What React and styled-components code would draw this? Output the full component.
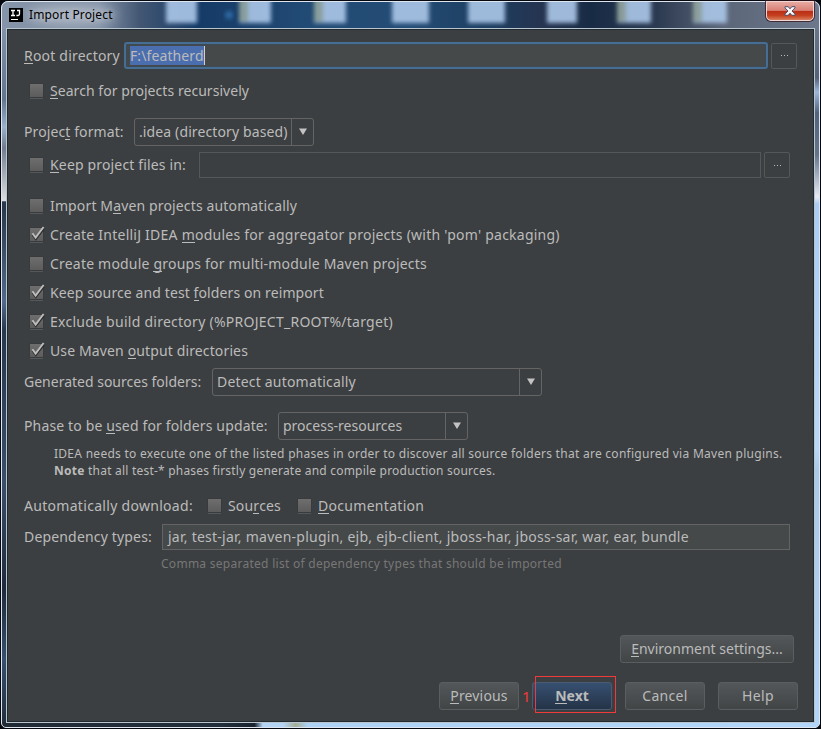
import React from "react";
import styled, { createGlobalStyle, css } from "styled-components";

const GlobalStyle = createGlobalStyle`
  *, *::before, *::after { box-sizing: border-box; }
  body { margin: 0; background: #05080f; overflow: hidden; }
`;

const Frame = styled.div`
  position: relative;
  width: 821px;
  height: 729px;
  padding: 1px;
  display: flex;
  overflow: hidden;
  background: #05080f;
  color: #bbbbbb;
  font: 14px/20px "Noto Sans", "Open Sans", sans-serif;
`;

const Backdrop = styled.svg`
  position: absolute;
  inset: 0;
`;

const Glass = styled.div`
  position: relative;
  flex: 1;
  display: flex;
  flex-direction: column;
  padding: 0 5px 5px;
  border: 1px solid #dfe6ef;
  border-radius: 7px 7px 5px 5px;
`;

const TitleBar = styled.header`
  height: 27px;
  flex: none;
  display: flex;
  align-items: flex-start;
  padding-left: 2px;
`;

const AppIcon = styled.svg`
  margin-top: 6px;
`;

const Title = styled.h1`
  margin: 4px 0 0 6px;
  font-size: 12px;
  font-weight: 400;
  line-height: 18px;
  letter-spacing: 0.15px;
  color: #000;
  text-shadow: 0 0 6px rgba(255, 255, 255, 0.35);
`;

const CloseButton = styled.button`
  width: 48px;
  height: 20px;
  margin: -1px 0 0 auto;
  padding: 0;
  display: flex;
  align-items: center;
  justify-content: center;
  border: 1px solid #f1d6d3;
  border-radius: 0 0 5px 5px;
  background: linear-gradient(#e7aaa2 0, #d98075 47%, #b92d15 50%, #c5401f 75%, #d8805f 100%);
  box-shadow: 0 0 0 1px rgba(50, 20, 30, 0.75);
`;

const Client = styled.main`
  flex: 1;
  display: flex;
  flex-direction: column;
  padding: 12px 15px 0 16px;
  border: 1px solid #202a30;
  outline: 1px solid #b8c5cd;
  background: #3c3f41;
`;

const Row = styled.div`
  flex: none;
  display: flex;
  align-items: center;
  height: ${(p) => p.$h}px;
  margin-top: ${(p) => p.$top || 0}px;
`;

const Text = styled.span`
  flex: none;
  white-space: pre;
  letter-spacing: ${(p) => p.$track || 0}px;
`;

const FieldLabel = styled(Text)`
  width: ${(p) => p.$w}px;
`;

const Mnemonic = styled.span`
  box-shadow: 0 1px 0 #bbbbbb;
  display: inline-block;
  line-height: 14px;
`;

const inputBase = css`
  display: flex;
  align-items: center;
  height: 26px;
  flex: none;
  width: ${(p) => p.$w}px;
`;

const FocusedInput = styled.div`
  ${inputBase}
  height: 27px;
  padding-left: 4px;
  border: 2px solid #466d94;
  border-radius: 3px;
  background: #45494a;
  box-shadow: inset 0 0 0 1px #3d4b57;
`;

const Selection = styled.span`
  height: 19px;
  line-height: 19px;
  letter-spacing: 0.1px;
  background: #4b6eaf;
  border-right: 1px solid #d0d0d0;
`;

const Input = styled.div`
  ${inputBase}
  padding-left: 5px;
  border: 1px solid ${(p) => (p.$disabled ? "#555758" : "#646464")};
  background: ${(p) => (p.$disabled ? "transparent" : "#45494a")};
`;

const BrowseButton = styled.button`
  flex: none;
  width: 26px;
  height: 26px;
  margin-left: 3px;
  padding: 0;
  display: flex;
  align-items: center;
  justify-content: center;
  gap: 2px;
  border: 1px solid #555758;
  border-radius: 2px;
  background: transparent;
`;

const Dot = styled.i`
  width: 1px;
  height: 1px;
  background: #bbbbbb;
`;

const ComboBox = styled.div`
  flex: none;
  display: flex;
  align-items: center;
  width: ${(p) => p.$w}px;
  height: 28px;
  padding-left: 4px;
  border: 1px solid #646464;
  border-radius: 3px;
`;

const ComboArrow = styled.span`
  display: flex;
  align-items: center;
  justify-content: center;
  width: 22px;
  height: 26px;
  margin-left: auto;
  border-left: 1px solid #646464;
`;

const CheckLabel = styled.label`
  flex: none;
  display: flex;
  align-items: center;
  gap: 5px;
  margin-left: ${(p) => (p.$inline ? 0 : 5)}px;
`;

const CheckRow = styled(CheckLabel)`
  height: 29px;
`;

const CheckList = styled.div`
  display: flex;
  flex-direction: column;
  flex: none;
  margin-top: 13px;
`;

const Hint = styled.p`
  flex: none;
  margin: ${(p) => p.$top}px 0 0 ${(p) => p.$left}px;
  font-size: 12px;
  line-height: 17px;
  letter-spacing: 0.272px;
  white-space: nowrap;
  color: ${(p) => (p.$muted ? "#777777" : "#bbbbbb")};
`;

const Button = styled.button`
  flex: none;
  width: ${(p) => p.$w || 80}px;
  height: 28px;
  padding: 0 0 1px;
  border: 1px solid ${(p) => (p.$primary ? "#4c5b70" : "#5b5e60")};
  border-radius: 3px;
  background: ${(p) =>
    p.$primary ? "linear-gradient(#375071, #243347)" : "linear-gradient(#535759, #414546)"};
  color: #bbbbbb;
  font: inherit;
  font-weight: ${(p) => (p.$primary ? 700 : 400)};
  letter-spacing: ${(p) => p.$track || 0}px;
`;

const ButtonRow = styled(Row)`
  justify-content: flex-end;
  padding-right: ${(p) => p.$right || 0}px;
  gap: 13px;
`;

const Highlight = styled.div`
  position: relative;
`;

const HighlightBox = styled.span`
  position: absolute;
  left: 3px;
  top: -6px;
  width: 81px;
  height: 37px;
  border: 1px solid #f03a3a;
`;

const StepNumber = styled.span`
  position: absolute;
  left: -10px;
  top: 4px;
  font-size: 15px;
  color: #f03a3a;
`;

function Check({ checked }) {
  return (
    <svg width="16" height="18" viewBox="0 0 16 18">
      <defs>
        <linearGradient id="checkFill" x1="0" y1="0" x2="0" y2="1">
          <stop offset="0" stopColor="#6e6e6e" />
          <stop offset="1" stopColor="#5c5c5c" />
        </linearGradient>
      </defs>
      <rect x="0.5" y="1.5" width="14" height="14" rx="1" fill="#343638" />
      <rect x="1" y="2" width="13" height="13" fill="url(#checkFill)" />
      <path d="M1 16.5h13" stroke="#55585a" />
      {checked && (
        <>
          <path d="M3.5 8.5L6.8 13L15 2.6" fill="none" stroke="#2e2e2e" strokeWidth="2.2" />
          <path d="M3.4 7.2L6.6 11.6L14.6 1" fill="none" stroke="#bdbdbd" strokeWidth="1.9" />
        </>
      )}
    </svg>
  );
}

function Combo({ width, track, children }) {
  return (
    <ComboBox $w={width}>
      <Text $track={track}>{children}</Text>
      <ComboArrow>
        <svg width="10" height="8" viewBox="0 0 10 8">
          <path d="M1 0.5h8L5 7z" fill="#c3c3c3" />
        </svg>
      </ComboArrow>
    </ComboBox>
  );
}

function Browse() {
  return (
    <BrowseButton aria-label="Browse">
      <Dot />
      <Dot />
      <Dot />
    </BrowseButton>
  );
}

const desktopIcons = [
  [166, 31, false],
  [239, 32, true],
  [314, 32, true],
  [392, 37, false],
  [468, 37, false],
  [547, 30, false],
  [617, 34, true],
  [693, 34, true],
];

function DesktopGlass() {
  return (
    <Backdrop width="821" height="729" viewBox="0 0 821 729">
      <defs>
        <linearGradient id="top" x1="0" x2="1">
          <stop offset="0" stopColor="#8594a8" />
          <stop offset="0.12" stopColor="#8291a7" />
          <stop offset="0.17" stopColor="#435773" />
          <stop offset="0.24" stopColor="#153a66" />
          <stop offset="0.37" stopColor="#214a74" />
          <stop offset="0.5" stopColor="#244c75" />
          <stop offset="0.6" stopColor="#1d3d5f" />
          <stop offset="0.66" stopColor="#263450" />
          <stop offset="0.72" stopColor="#182b45" />
          <stop offset="0.8" stopColor="#2c3a51" />
          <stop offset="0.88" stopColor="#5c6679" />
          <stop offset="1" stopColor="#6d788c" />
        </linearGradient>
        <linearGradient id="left" x1="0" y1="0" x2="0" y2="1">
          <stop offset="0" stopColor="#8191a8" />
          <stop offset="0.1" stopColor="#62758f" />
          <stop offset="0.14" stopColor="#9ab0cc" />
          <stop offset="0.17" stopColor="#707c8e" />
          <stop offset="0.245" stopColor="#dededf" />
          <stop offset="0.247" stopColor="#28374a" />
          <stop offset="0.39" stopColor="#52698a" />
          <stop offset="0.43" stopColor="#27394f" />
          <stop offset="0.65" stopColor="#3b4e6a" />
          <stop offset="0.8" stopColor="#1f2a3b" />
          <stop offset="0.9" stopColor="#37506f" />
          <stop offset="1" stopColor="#202b38" />
        </linearGradient>
        <linearGradient id="right" x1="0" y1="0" x2="0" y2="1">
          <stop offset="0" stopColor="#697489" />
          <stop offset="0.07" stopColor="#566178" />
          <stop offset="0.09" stopColor="#9ab8dc" />
          <stop offset="0.12" stopColor="#52627c" />
          <stop offset="0.18" stopColor="#65738a" />
          <stop offset="0.24" stopColor="#e8edf4" />
          <stop offset="0.25" stopColor="#a9cdf5" />
          <stop offset="0.6" stopColor="#b8d8fb" />
          <stop offset="0.63" stopColor="#a9c9ea" />
          <stop offset="1" stopColor="#b2d5fa" />
        </linearGradient>
        <linearGradient id="bottom" x1="0" x2="1">
          <stop offset="0" stopColor="#202a35" />
          <stop offset="0.27" stopColor="#222e3b" />
          <stop offset="0.31" stopColor="#19222e" />
          <stop offset="0.32" stopColor="#b3d4f4" />
          <stop offset="0.345" stopColor="#b3d4f4" />
          <stop offset="0.36" stopColor="#a3ae98" />
          <stop offset="0.375" stopColor="#add2f5" />
          <stop offset="1" stopColor="#b2d5fa" />
        </linearGradient>
        <filter id="soft" x="-20%" y="-30%" width="140%" height="160%">
          <feGaussianBlur stdDeviation="2" />
        </filter>
        <filter id="haze" x="-50%" y="-50%" width="200%" height="200%">
          <feGaussianBlur stdDeviation="6" />
        </filter>
        <clipPath id="pane">
          <rect x="1" y="1" width="819" height="727" rx="7" />
        </clipPath>
      </defs>
      <g clipPath="url(#pane)">
        <rect y="0" width="821" height="30" fill="url(#top)" />
        <rect x="0" y="29" width="8" height="700" fill="url(#left)" />
        <rect x="813" y="29" width="8" height="700" fill="url(#right)" />
        <rect x="0" y="722" width="821" height="7" fill="url(#bottom)" />
        <ellipse cx="72" cy="15" rx="44" ry="9" fill="#bcc3cd" opacity="0.75" filter="url(#haze)" />
        <circle cx="229" cy="15" r="4" fill="#3575b3" opacity="0.8" filter="url(#soft)" />
        {desktopIcons.map(([x, w, folder]) => (
          <g key={x} filter="url(#soft)" opacity="0.92">
            <rect x={x} y="-4" width={w} height="27" fill="#a9c5e6" />
            {folder && <rect x={x} y="-4" width="9" height="26" fill="#93a6a0" />}
          </g>
        ))}
      </g>
    </Backdrop>
  );
}

export default function App() {
  return (
    <>
      <GlobalStyle />
      <Frame>
        <DesktopGlass />
        <Glass>
          <TitleBar>
            <AppIcon width="14" height="14" viewBox="0 0 14 14">
              <rect width="14" height="14" fill="#000" />
              <path
                d="M2 2.5h4M4 2.5v5M2 7.5h4M8 2.5h3.2M10.5 2.5v3.6q0 1.4-1.4 1.4H7.4"
                fill="none"
                stroke="#fff"
                strokeWidth="1.3"
              />
              <path d="M2 11.5h7" stroke="#fff" />
            </AppIcon>
            <Title>Import Project</Title>
            <CloseButton aria-label="Close">
              <svg width="12" height="10" viewBox="0 0 12 10">
                <path
                  d="M1 .7h3.2L6 2.8 7.8.7H11v1.2L8 5l3 3.1v1.2H7.8L6 7.2 4.2 9.3H1V8.1L4 5 1 1.9z"
                  fill="#f6f6f6"
                  stroke="#4b506b"
                  strokeWidth="1"
                />
              </svg>
            </CloseButton>
          </TitleBar>
          <Client>
            <Row $h={27}>
              <FieldLabel $w={100} $track={0.2}>
                <Mnemonic>R</Mnemonic>oot directory
              </FieldLabel>
              <FocusedInput $w={644}>
                <Selection>F:\featherd</Selection>
              </FocusedInput>
              <Browse />
            </Row>
            <Row $h={30} $top={7}>
              <CheckLabel>
                <Check />
                <Text $track={0.05}>
                  <Mnemonic>S</Mnemonic>earch for projects recursively
                </Text>
              </CheckLabel>
            </Row>
            <Row $h={28} $top={12}>
              <FieldLabel $w={110} $track={0.1}>
                Projec<Mnemonic>t</Mnemonic> format:
              </FieldLabel>
              <Combo width={180} track={0.12}>.idea (directory based)</Combo>
            </Row>
            <Row $h={26} $top={6}>
              <CheckLabel>
                <Check />
                <FieldLabel $w={149} $track={0.16}>
                  <Mnemonic>K</Mnemonic>eep project files in:
                </FieldLabel>
              </CheckLabel>
              <Input $w={562} $disabled />
              <Browse />
            </Row>
            <CheckList>
              <CheckRow>
                <Check />
                <Text $track={0.14}>
                  Import M<Mnemonic>a</Mnemonic>ven projects automatically
                </Text>
              </CheckRow>
              <CheckRow>
                <Check checked />
                <Text $track={0.236}>
                  Create IntelliJ IDEA <Mnemonic>m</Mnemonic>odules for aggregator projects (with 'pom' packaging)
                </Text>
              </CheckRow>
              <CheckRow>
                <Check />
                <Text $track={0.2}>
                  Create module <Mnemonic>g</Mnemonic>roups for multi-module Maven projects
                </Text>
              </CheckRow>
              <CheckRow>
                <Check checked />
                <Text $track={0.105}>
                  Keep source and test <Mnemonic>f</Mnemonic>olders on reimport
                </Text>
              </CheckRow>
              <CheckRow>
                <Check checked />
                <Text $track={0.26}>Exclude build directory (%PROJECT_ROOT%/target)</Text>
              </CheckRow>
              <CheckRow>
                <Check checked />
                <Text $track={0.13}>
                  Use Maven <Mnemonic>o</Mnemonic>utput directories
                </Text>
              </CheckRow>
            </CheckList>
            <Row $h={28} $top={3}>
              <FieldLabel $w={188} $track={0}>Generated sources folders:</FieldLabel>
              <Combo width={330} track={0.19}>Detect automatically</Combo>
            </Row>
            <Row $h={28} $top={16}>
              <FieldLabel $w={254} $track={0.14}>
                Phase to be <Mnemonic>u</Mnemonic>sed for folders update:
              </FieldLabel>
              <Combo width={190}>process-resources</Combo>
            </Row>
            <Hint $top={5} $left={30}>
              IDEA needs to execute one of the listed phases in order to discover all source folders that are configured via Maven plugins.
              <br />
              <b>Note</b>
              <Text $track={0.21}> that all test-* phases firstly generate and compile production sources.</Text>
            </Hint>
            <Row $h={26} $top={14}>
              <FieldLabel $w={183} $track={0.3}>Automatically download:</FieldLabel>
              <CheckLabel $inline>
                <Check />
                <FieldLabel $w={69} $track={0.15}>
                  Sou<Mnemonic>r</Mnemonic>ces
                </FieldLabel>
              </CheckLabel>
              <CheckLabel $inline>
                <Check />
                <Text $track={0.3}>
                  <Mnemonic>D</Mnemonic>ocumentation
                </Text>
              </CheckLabel>
            </Row>
            <Row $h={26} $top={5}>
              <FieldLabel $w={138} $track={0.17}>Dependency types:</FieldLabel>
              <Input $w={628}>
                <Text $track={0.248}>
                  jar, test-jar, maven-plugin, ejb, ejb-client, jboss-har, jboss-sar, war, ear, bundle
                </Text>
              </Input>
            </Row>
            <Hint $top={5} $left={137} $muted>
              Comma separated list of dependency types that should be imported
            </Hint>
            <ButtonRow $h={28} $top={63} $right={4}>
              <Button $w={174}>
                <Mnemonic>E</Mnemonic>nvironment settings...
              </Button>
            </ButtonRow>
            <ButtonRow $h={28} $top={19}>
              <Button $track={0.15}>
                <Mnemonic>P</Mnemonic>revious
              </Button>
              <Highlight>
                <Button $primary>
                  <Mnemonic>N</Mnemonic>ext
                </Button>
                <HighlightBox />
                <StepNumber>1</StepNumber>
              </Highlight>
              <Button $track={0.3}>Cancel</Button>
              <Button $track={0.4}>Help</Button>
            </ButtonRow>
          </Client>
        </Glass>
      </Frame>
    </>
  );
}
